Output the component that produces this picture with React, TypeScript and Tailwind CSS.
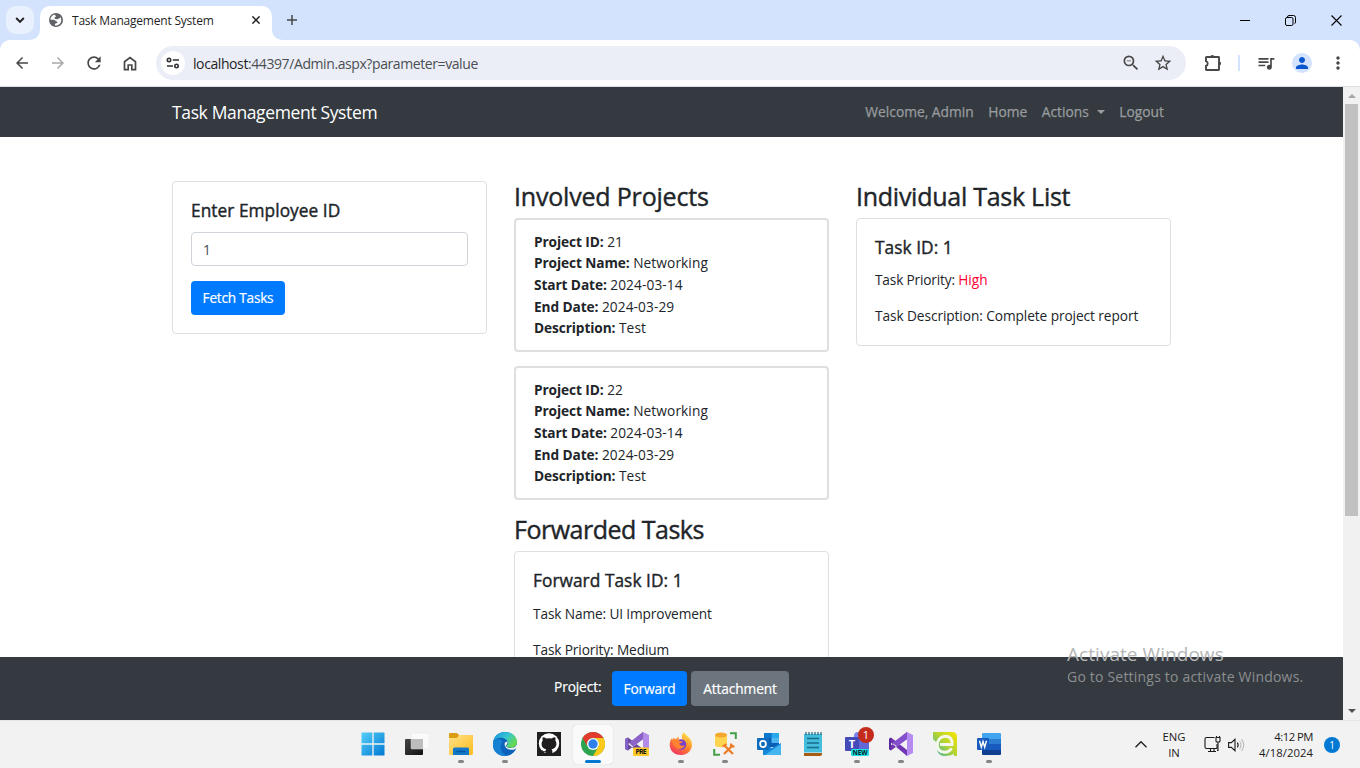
import type { ReactNode } from 'react';
import { MdArrowBack, MdArrowForward, MdRefresh, MdZoomOut, MdStarBorder, MdQueueMusic, MdPerson, MdMoreVert } from 'react-icons/md';

function TabStrip() {
  return (
    <div className="flex h-10 shrink-0 bg-[#d3e3fd]">
      <div className="ml-1.5 mt-1.5 flex h-7 w-7 items-center justify-center rounded-[10px] bg-[#e9f0fe]">
        <svg width="10" height="8" viewBox="0 0 10 8" fill="none" stroke="#1f1f1f" strokeWidth="1.9"><path d="M1.2 2 5 5.8 8.8 2" /></svg>
      </div>
      <div className="relative ml-1.5 mt-1.5 flex h-[34px] w-[232px] items-start rounded-t-[10px] bg-white pl-[9px] pt-[7px]">
        <svg className="absolute -left-2.5 bottom-0" width="10" height="10"><path d="M10 0v10H0A10 10 0 0 0 10 0" fill="#fff" /></svg>
        <svg className="absolute -right-2.5 bottom-0" width="10" height="10"><path d="M0 0v10h10A10 10 0 0 1 0 0" fill="#fff" /></svg>
        <svg width="14" height="14" viewBox="0 0 14 14">
          <circle cx="7" cy="7" r="7" fill="#5f6368" />
          <path d="M5.6 1.5C3 2.2 1.5 4.300 1.400 6.700h3.300c1.500 0 1.700 1.700 3.100 1.700.9 0 .9 1 .3 1.500-.8.5-2.200.2-2.200 1.200v1.400c2 .3 4.600-.7 5.700-2.800 1-1.900.8-4.200-.2-5.700-.3 1-.7 1.400-1.500 1.400-1 0-1.100.8-2.100.8-1 0-2.200-.3-2.200-1.300 0-1.100 1.500-.8 1.500-1.800 0-.7-1.500-.4-1.500-1.600" fill="#fff" />
        </svg>
        <span className="ml-[9px] h-4 w-[149px] whitespace-nowrap text-[12px] leading-4 tracking-[-0.21px] text-[#1f1f1f]">Task Management System</span>
        <svg className="ml-[31px] mt-[3px]" width="8" height="8" viewBox="0 0 8 8" stroke="#1f1f1f" strokeWidth="1.5"><path d="m.4.4 7.200 7.200M7.600.4.400 7.600" /></svg>
      </div>
      <svg className="ml-[15px] mt-[15px]" width="10" height="10" viewBox="0 0 10 10" stroke="#474747" strokeWidth="1.500"><path d="M5 0v10M0 5h10" /></svg>
      <div className="ml-auto flex items-center gap-[35px] pr-[18px] text-black">
        <svg width="10" height="10" stroke="currentColor"><path d="M0 5.500h10" /></svg>
        <svg width="11" height="11" viewBox="0 0 11 11" fill="none" stroke="currentColor"><rect x=".5" y="2.500" width="7.500" height="8" rx="1.500" /><path d="M2.500 2.300v-.3q0-1.500 1.500-1.500h4.500q2 0 2 2v4.500q0 1.500-1 1.600" /></svg>
        <svg width="11" height="11" viewBox="0 0 11 11" stroke="currentColor" strokeWidth="1.100"><path d="m.5.500 10 10M10.500.500l-10 10" /></svg>
      </div>
    </div>
  );
}

function Toolbar() {
  return (
    <div className="bg-[#d3e3fd]">
      <div className="flex h-[47px] items-center rounded-t-[10px] border-b border-[#dcdee2] bg-white text-[#474747]">
        <MdArrowBack className="ml-[13px]" size={18} />
        <MdArrowForward className="ml-[18px] text-[#a9a9a9]" size={18} />
        <MdRefresh className="ml-[17px]" size={20} />
        <svg className="ml-[19px]" width="14" height="15" viewBox="0 0 14 15" fill="none" stroke="currentColor" strokeWidth="1.700"><path d="M1.500 5.700 7 1.500l5.500 4.200v8H8.800V9H5.200v4.700H1.500z" /></svg>
        <div className="ml-[19px] flex h-[34px] w-[1030px] items-center rounded-full bg-[#ebeef7] pl-[5px]">
          <div className="flex h-6 w-6 items-center justify-center rounded-full bg-white">
            <svg width="14" height="12" viewBox="0 0 14 12" fill="none" stroke="#303134" strokeWidth="1.600"><circle cx="3" cy="3" r="1.700" /><path d="M6.800 3H13M1 9h6" /><circle cx="10.500" cy="9" r="1.700" /></svg>
          </div>
          <span className="ml-[8px] text-[14px] tracking-[-0.41px] text-[#4b4e52]"><span className="text-[#1f1f1f]">localhost</span>:44397/Admin.aspx?parameter=value</span>
          <MdZoomOut className="ml-auto" size={20} />
          <MdStarBorder className="ml-3 mr-[13px]" size={20} />
        </div>
        <svg className="ml-[18px]" width="18" height="18" viewBox="0 0 18 18" fill="none" stroke="currentColor" strokeWidth="1.900"><path d="M2.500 3h12q.5 0 .5.500v12q0 .5-.5.500h-12q-.5 0-.5-.5v-3.700a2.400 2.400 0 0 0 0-4.600V3.500q0-.5.500-.5z" /><path d="M6.300 2.900a2 2 0 0 1 4 0zM15.100 7.400a2 2 0 0 1 0 4z" fill="currentColor" stroke="none" /></svg>
        <div className="ml-4 h-4 w-0.5 bg-[#d3e3fd]" />
        <MdQueueMusic className="ml-[16px]" size={20} />
        <div className="ml-4 flex h-5 w-5 items-center justify-center rounded-full bg-[#d3e3fd]"><MdPerson size={18} className="text-[#0b57d0]" /></div>
        <MdMoreVert className="ml-4" size={20} />
      </div>
    </div>
  );
}

function NavBar() {
  return (
    <nav className="flex h-[50px] items-center bg-[#343a40] pl-[172px] pr-[179px] text-[13.800px] text-[#999c9f]">
      <span className="text-[17.500px] tracking-[-0.36px] text-white">Task Management System</span>
      <div className="ml-auto flex items-center gap-[14.500px] [-webkit-text-stroke:0.25px]">
        <span>Welcome, Admin</span>
        <span>Home</span>
        <span className="flex items-center gap-[8px]">Actions
          <svg width="8" height="4"><path d="M0 0h8L4 4z" fill="currentColor" /></svg>
        </span>
        <span>Logout</span>
      </div>
    </nav>
  );
}

function Project({ id }: { id: number }) {
  const rows: [string, string | number][] = [
    ['Project ID:', id],
    ['Project Name:', 'Networking'],
    ['Start Date:', '2024-03-14'],
    ['End Date:', '2024-03-29'],
    ['Description:', 'Test'],
  ];
  return (
    <div className="mb-3.5 h-[134px] rounded-[4px] border-2 border-[#dfdfdf] px-[18px] pt-[10.800px]">
      {rows.map(([label, value]) => (
        <p key={label} className="h-[21.600px] leading-[21.600px]"><b className="tracking-[-0.1px]">{label}</b> <span className="tracking-[0.1px]">{value}</span></p>
      ))}
    </div>
  );
}

function Heading({ className, children }: { className: string; children: ReactNode }) {
  return <h2 className={`mb-[6px] h-[31px] whitespace-nowrap text-[25px] leading-[31px] [-webkit-text-stroke:0.4px] ${className}`}>{children}</h2>;
}

function CardTitle({ children }: { children: ReactNode }) {
  return <h5 className="h-[22px] text-[17.300px] leading-[22px] tracking-[0.05px] [-webkit-text-stroke:0.4px]">{children}</h5>;
}

function Page() {
  return (
    <main className="flex min-h-0 flex-1 flex-col overflow-hidden">
      <NavBar />
      <div className="grid min-h-0 flex-1 grid-cols-[315px_315px_315px] gap-[27px] overflow-hidden pl-[172px] pt-11">
        <section>
          <div className="h-[153px] rounded-[4px] border border-[#dfdfdf] px-[18px] pt-[18px]">
            <CardTitle>Enter Employee ID</CardTitle>
            <input className="mt-2.5 block h-[34px] w-full rounded-[4px] border border-[#ced4da] px-[11px] text-[#495057] outline-none" defaultValue="1" />
            <button className="mt-[15px] block h-[34px] w-[94px] whitespace-nowrap rounded-[4px] bg-[#007bff] text-[13.600px] tracking-[-0.2px] text-white [-webkit-text-stroke:0.2px]">Fetch Tasks</button>
          </div>
        </section>
        <section>
          <Heading className="tracking-[-0.19px]">Involved Projects</Heading>
          <Project id={21} />
          <Project id={22} />
          <Heading className="tracking-[-0.5px]">Forwarded Tasks</Heading>
          <div className="h-[200px] rounded-[4px] border border-[#dfdfdf] px-[18px] pt-[18px] tracking-[-0.13px]">
            <CardTitle>Forward Task ID: 1</CardTitle>
            <p className="mb-3.5 mt-[11px] leading-[22px]">Task Name: UI Improvement</p>
            <p className="leading-[22px]">Task Priority: Medium</p>
          </div>
        </section>
        <section>
          <Heading className="tracking-[-0.26px]">Individual Task List</Heading>
          <div className="h-[128px] rounded-[4px] border border-[#dfdfdf] px-[18px] pt-[18px]">
            <CardTitle>Task ID: 1</CardTitle>
            <p className="mb-3.5 mt-2.5 leading-[22px] tracking-[-0.18px]">Task Priority: <span className="tracking-normal text-[#ff0033]">High</span></p>
            <p className="leading-[22px] tracking-[-0.08px]">Task Description: Complete project report</p>
          </div>
        </section>
      </div>
      <footer className="flex h-[63px] shrink-0 bg-[#343a40] pl-[554px] pt-3.5 text-white [-webkit-text-stroke:0.2px]">
        <span className="w-[58px] pt-[5px] leading-[21px] tracking-[-0.1px]">Project:</span>
        <button className="h-[35px] w-[75px] rounded-[4px] bg-[#007bff] pt-px tracking-[-0.15px]">Forward</button>
        <button className="ml-1 h-[35px] w-[98px] rounded-[4px] bg-[#6c757d] pt-px tracking-[-0.1px]">Attachment</button>
      </footer>
    </main>
  );
}

function ScrollBar() {
  return (
    <div className="flex w-[17px] flex-col items-center bg-[#f1f1f1]">
      <svg className="mt-[7px]" width="8" height="4"><path d="M4 0 8 4H0z" fill="#a3a3a3" /></svg>
      <div className="mt-1.5 h-[412px] w-[13px] bg-[#c1c1c1]" />
      <svg className="mb-[7px] mt-auto" width="8" height="4"><path d="M0 0h8L4 4z" fill="#505050" /></svg>
    </div>
  );
}

const Start = () => (
  <svg width="24" height="24" viewBox="0 0 24 24"><defs><linearGradient id="win" x2="1" y2="1"><stop stopColor="#55d0f8" /><stop offset="1" stopColor="#0078d4" /></linearGradient></defs><path d="M1 .5h11v11H.5V1q0-.5.500-.5M12.500.500H23q.5 0 .5.500v10.500h-11M.500 12.500h11.500v11H1q-.5 0-.5-.5M12.500 12.500h11V23q0 .5-.5.500H12.500" fill="url(#win)" /><path d="M11.800 0v24M0 12h24" stroke="#f2f2f2" /></svg>
);
const TaskView = () => (
  <svg width="24" height="24"><defs><linearGradient id="tv" x2="1" y2="1"><stop stopColor="#444" /><stop offset="1" stopColor="#111" /></linearGradient></defs><rect y="7" width="18" height="16" rx="1" fill="url(#tv)" /><rect x="6" y="1" width="18" height="16" rx="1" fill="#fafafa" stroke="#e3e3e3" strokeWidth=".5" /><path d="M6 7h12v10H7q-1 0-1-1" fill="#bdbdbd" /></svg>
);
const Files = () => (
  <svg width="24" height="24"><defs><linearGradient id="fo" x2="1" y2="1"><stop stopColor="#ffe08a" /><stop offset="1" stopColor="#fdbd1c" /></linearGradient></defs><path d="M0 2q0-1 1-1h7l2 2h13q1 0 1 1v7H0" fill="#dc9d12" /><path d="M0 6h8l2-3h13q1 0 1 1v17q0 2-1 2H1q-1 0-1-1" fill="url(#fo)" /><path d="M4 23v-6q0-1.500 1.500-1.500h13q1.500 0 1.500 1.500v6" fill="#1278ca" /><path d="M7.500 19.500h9" stroke="#0a579f" strokeWidth="1.500" /></svg>
);
const Edge = () => (
  <svg width="24" height="24"><defs><linearGradient id="ed" x2="1" y2=".6"><stop stopColor="#188be0" /><stop offset=".55" stopColor="#37c7d0" /><stop offset="1" stopColor="#66da48" /></linearGradient></defs><circle cx="12" cy="12" r="12" fill="#0c63b9" /><path d="M0 10C1 3.500 6 0 12 0c7 0 12 4.500 12 9.500 0 4-3 6.300-6.300 6.300-2.500 0-4.200-1-4.200-1.900 0-.7 1.400-1 1.400-3C14.900 8 11.500 5.700 8 5.700 4 5.700 1 7.700 0 10" fill="url(#ed)" /><path d="M0 11.500C1 7.500 5 6 8 7.500c1.600.9 1.700 2 1 3-3 4.500-.5 10.500 4.500 12.800C6 25.200-1 19.500 0 11.500" fill="#1681d3" /><path d="M14.600 9.500c-2 0-3.100 1-3 3 .3 3.500 4 6 8.500 5.200 1.500-.3 2.500-1 3.900-1.700V12c-1 2.900-3.500 4.100-6.300 4.100-2.600 0-4.700-1.200-4.700-2.300 0-.7 1.500-1.100 1.600-4.300" fill="#f2f2f2" /></svg>
);
const Github = () => (
  <svg width="24" height="24"><path d="M0 0h24v24H0z" fill="#211e20" /><circle cx="12" cy="11.500" r="10.200" fill="#fff" /><path d="M5.700 5.200q2.100.1 3.600 1.300 2.700-.6 5.400 0 1.500-1.200 3.600-1.300.5 1.700 0 3.200 1.400 1.600 1.100 4.100c-.4 3-2.200 4.300-4.900 4.700q1.200 1 1 5.500-3.500.9-7 0V20c-3 .6-3.500-.9-4.600-2 1.600-.4 2.300 1.300 3.200 1.300h1.300q0-1.300.9-2.100C6.600 16.800 4.800 15.500 4.600 12.500q-.3-2.500 1.100-4.100-.5-1.500 0-3.200" fill="#211e20" /></svg>
);
const Chrome = () => (
  <svg width="24" height="24"><circle cx="12" cy="12" r="12" fill="#2da44f" /><path d="M1.600 6A12 12 0 0 1 22.400 6H12a6 6 0 0 0-5.200 9z" fill="#e33b2e" /><path d="M22.400 6A12 12 0 0 1 12 24l5.200-9A6 6 0 0 0 12 6z" fill="#fdc918" /><circle cx="12" cy="12" r="6" fill="#fff" /><circle cx="12" cy="12" r="4.700" fill="#2f80ed" /></svg>
);
const VSPreview = () => (
  <svg width="24" height="24"><path d="M0 7 3 5.500 18 17v7L0 9.500zM0 17l3 1.500L18 7V0L0 14.500z" fill="#68489f" /><path d="M0 7v10l3 1.500v-13z" fill="#8661c5" /><path d="m18 0 6 3v18l-6 3z" fill="#b28be8" /><path d="M18 0v7L8 14.500 4 11z" fill="#8c62c8" /><rect x="8" y="15.500" width="16" height="8.500" rx="1" fill="#ffc928" /><text x="16" y="22.300" textAnchor="middle" fontSize="6.800" fontWeight="700" fill="#111" textLength="11">PRE</text></svg>
);
const Firefox = () => (
  <svg width="24" height="24"><defs><linearGradient id="ff" x1=".8" x2=".2" y2="1"><stop stopColor="#fff04b" /><stop offset=".5" stopColor="#ff862b" /><stop offset="1" stopColor="#f32a66" /></linearGradient></defs><path d="M14.800 0c.8 2.600 6.700 5 8 10.500C24 17 19.500 23 12 23 5 23 .7 18.500.7 12.500c0-3 1.100-4.800 2.400-6.500l.2 2L5 5.500l1 2 4-3-.2 3.200 3.700-.2C12 4.500 13.200 2 14.800 0" fill="url(#ff)" /><circle cx="12" cy="12.500" r="5.200" fill="#7341cf" /><path d="M3.500 8q4-1.600 8 1.200l2.500.3q-1 2.300-4 2.100 2 3.500 6 1.500-2 4.500-6.700 3.800Q4 15.500 3.500 8" fill="#ff8230" /></svg>
);
const DbTool = () => (
  <svg width="24" height="24"><path d="M17 1.200h5.800V7M1.200 17v5.800H7" fill="none" stroke="#43a047" strokeWidth="2" /><path d="M2 3v10c0 3 12 3 12 0V3" fill="#ffd54f" /><ellipse cx="8" cy="3" rx="6" ry="2.500" fill="#f4a72f" /><path d="m11 13 9 9M20 13l-9 9" stroke="#ef7c24" strokeWidth="2.200" /><path d="m9.500 14.500 4-2.500M18 11.500v3h3.500" fill="none" stroke="#ef7c24" strokeWidth="2" /></svg>
);
const Outlook = () => (
  <svg width="24" height="24"><path d="M7 1h15v14H7z" fill="#0a5eb5" /><path d="M7 1h7.500v5H7z" fill="#0b78d0" /><path d="M14.500 1H22v5h-7.500z" fill="#28a8ea" /><path d="M14.500 6H22v5h-7.500z" fill="#50b6ef" /><path d="M6 11l9 5 9-5v12H6" fill="#1688dc" /><path d="m8 23 16-11v11" fill="#45b5ef" /><rect y="6" width="12" height="12" rx="1" fill="#0f6cbd" /><ellipse cx="6" cy="12" rx="2.900" ry="3.200" fill="none" stroke="#fff" strokeWidth="1.800" /></svg>
);
const Notepad = () => (
  <svg width="24" height="24"><path d="M3 20h18v2q0 2-2 2H3z" fill="#a65b13" /><path d="M3 20h18v1H3" fill="#f7f7f7" /><path d="M3 2h18v18.500H3z" fill="#45bddd" /><path d="M5 0v3M8 0v3M11 0v3M14 0v3M17 0v3M20 0v3" stroke="#1d617c" strokeWidth="1.200" /><path d="M6 6.500h12M6 11h12M6 15.500h12" stroke="#176e8d" strokeWidth="1.700" /></svg>
);
const Teams = () => (
  <svg className="overflow-visible" width="24" height="24"><circle cx="13" cy="4" r="4" fill="#7983e8" /><path d="M12 7h12v10q0 4-5 5h-7" fill="#6269d6" /><rect y="5" width="14" height="14" rx="1" fill="#444bb9" /><text x="7" y="16" textAnchor="middle" fontSize="11" fontWeight="700" fill="#fff">T</text><rect x="6" y="17" width="18" height="7" rx="1.500" fill="#20e0e5" /><text x="15" y="23" textAnchor="middle" fontSize="6.500" fontWeight="700" fill="#05262b" textLength="15">NEW</text><circle cx="21" cy="3" r="8" fill="#c42b1c" /><text x="21" y="7" textAnchor="middle" fontSize="11" fill="#fff">1</text></svg>
);
const VisualStudio = () => (
  <svg width="24" height="24"><path d="M0 7 2 5.500 18 18v6L0 9zM0 17l2 1.500L18 7V0L0 15z" fill="#7136b3" /><path d="M0 7v10l2 1.500V5.500z" fill="#59299a" /><path d="m18 0 6 3v18l-6 3z" fill="#b68bf2" /><path d="M18 0v7L8 14.500 3.500 11z" fill="#8550cb" /></svg>
);
const EditorIcon = () => (
  <svg width="24" height="24"><defs><linearGradient id="eg" x1="1" x2="0" y2=".9"><stop stopColor="#f8e500" /><stop offset=".5" stopColor="#b5d431" /><stop offset="1" stopColor="#35b3a5" /></linearGradient></defs><path d="M0 0h19q5 0 5 5v19h-3v-2q-4 2-9 2C4 24 3 17 5 12L0 7z" fill="url(#eg)" /><path d="M18.500 16.300c-1.500 2.600-4.200 4-7 4C6.500 20.300 4 17 4.300 12.500 4.700 7.500 8 4.300 12.500 4.300c5 0 7.100 4.200 6.600 8.300H7" fill="none" stroke="#f5f7ed" strokeWidth="3" /></svg>
);
const Word = () => (
  <svg width="24" height="24"><path d="M6 1h17q1 0 1 1v5H5V2q0-1 1-1" fill="#41a5ee" /><path d="M5 7h19v5H5z" fill="#2b7cd3" /><path d="M5 12h19v6H5z" fill="#185abd" /><path d="M5 18h19v4q0 1-1 1H6q-1 0-1-1" fill="#103f91" /><rect y="6" width="12" height="12" rx="1" fill="#185abd" /><path d="m2.500 8.700 1.800 6.500L6 9.500l1.700 5.700 1.800-6.500" fill="none" stroke="#fff" strokeWidth="1.400" /></svg>
);

const apps: { icon: ReactNode; state?: 'open' | 'active' }[] = [
  { icon: <Start /> },
  { icon: <TaskView /> },
  { icon: <Files />, state: 'open' },
  { icon: <Edge />, state: 'open' },
  { icon: <Github /> },
  { icon: <Chrome />, state: 'active' },
  { icon: <VSPreview /> },
  { icon: <Firefox />, state: 'open' },
  { icon: <DbTool />, state: 'open' },
  { icon: <Outlook /> },
  { icon: <Notepad /> },
  { icon: <Teams />, state: 'open' },
  { icon: <VisualStudio />, state: 'open' },
  { icon: <EditorIcon /> },
  { icon: <Word />, state: 'open' },
];

function TaskBar() {
  return (
    <div className="flex h-12 shrink-0 border-t border-[#e5e5e5] bg-[#f2f2f2] pl-[353px] text-[#1b1b1b]">
      <div className="flex gap-1 pt-[4px]">
        {apps.map(({ icon, state }, i) => (
          <div key={i} className={`relative flex h-[39px] w-10 justify-center rounded-[4px] pt-[7px] ${state === 'active' ? 'bg-[#fafafa] shadow-[0_0_1px_#bbb]' : ''}`}>
            {icon}
            {state === 'open' && <i className="absolute bottom-[1px] h-[3px] w-1.5 rounded-full bg-[#858585]" />}
            {state === 'active' && <i className="absolute bottom-[1px] h-[3px] w-4 rounded-full bg-[#0078d4]" />}
          </div>
        ))}
      </div>
      <div className="ml-auto flex items-center pr-5 text-[11.300px] leading-4">
        <svg className="mr-[15px]" width="12" height="7" fill="none" stroke="currentColor" strokeWidth="1.300"><path d="m.5 6.200 5.500-5.500 5.500 5.500" /></svg>
        <div className="mr-[18px] w-6 text-center">ENG<br />IN</div>
        <svg className="mr-[7px]" width="17" height="17" viewBox="0 0 17 17" fill="none" stroke="currentColor" strokeWidth="1.100"><path d="M10.500 1.500H2.500Q1 1.500 1 3v8q0 1.500 1.500 1.500H13V8M4 15.500h8M6.500 12.500v3M10 12.500v3" /><path d="M12 1.500h4V5q0 1-1 1h-2q-1 0-1-1zM12.500 0v1.500M15.500 0v1.500M14 6v8.500h-1" /></svg>
        <svg className="mr-[14px]" width="17" height="14" viewBox="0 0 17 14" fill="none" stroke="currentColor" strokeWidth="1.100"><path d="M.6 4.600h2.700L7 1.300v11.400L3.300 9.400H.6zM9.300 4.700q1.700 2.300 0 4.600" /><path d="M11.500 3q3 4 0 8M13.500 1.200q4.500 5.800 0 11.600" stroke="#bbb" /></svg>
        <div className="mr-[11px] w-[54px] whitespace-nowrap text-right"><span className="tracking-[-0.5px]">4:12 PM</span><br /><span className="tracking-[0.05px]">4/18/2024</span></div>
        <div className="flex h-4 w-4 items-center justify-center rounded-full bg-[#0078d4] text-[10px] text-white">1</div>
      </div>
    </div>
  );
}

export default function App() {
  return (
    <div className="relative flex h-[768px] w-[1360px] flex-col overflow-hidden bg-white font-['Open_Sans','Noto_Sans',sans-serif] text-[13.700px] text-[#212529]">
      <TabStrip />
      <Toolbar />
      <div className="flex min-h-0 flex-1">
        <Page />
        <ScrollBar />
      </div>
      <TaskBar />
      <div className="absolute left-[1067px] top-[641px] whitespace-nowrap text-[#8d8e90]">
        <p className="text-[19px] leading-[26px] tracking-[0.05px] text-[#b5b6b7]">Activate Windows</p>
        <p className="text-[14px] leading-5 tracking-[0.2px]">Go to Settings to activate Windows.</p>
      </div>
    </div>
  );
}
